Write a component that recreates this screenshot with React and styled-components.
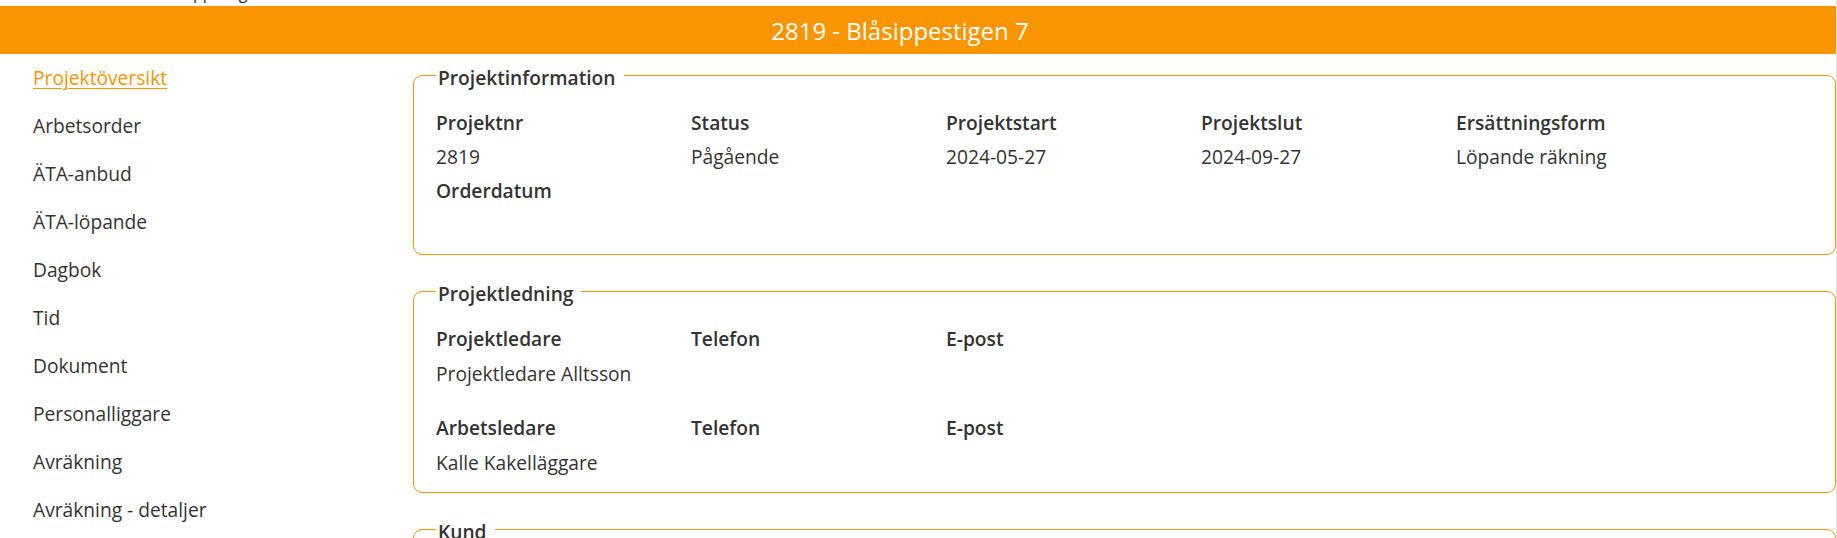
import React from 'react'
import styled, { createGlobalStyle } from 'styled-components'

const orange = '#f89500'
const ink = '#333'

const GlobalStyle = createGlobalStyle`
    html, body {
        margin: 0;
        padding: 0;
        background: #fff;
    }
    body {
        font-family: "Open Sans", "Noto Sans", sans-serif;
        font-size: 19.2px;
        color: ${ink};
        overflow: hidden;
    }
`

const Page = styled.div`
    margin-top: -20px;
    border-right: 1px solid #e4e4e4;
`

const Crumb = styled.div`
    height: 26px;
    line-height: 26px;
    font-size: 16px;
    padding-left: 158px;
    color: #222;
`

const Header = styled.header`
    height: 48px;
    background: ${orange};
    color: #fff;
    display: flex;
    align-items: center;
    justify-content: center;
    padding-right: 36px;
    font-size: 24px;
`

const Body = styled.div`
    display: flex;
    align-items: flex-start;
`

const Sidebar = styled.nav`
    width: 413px;
    flex-shrink: 0;
    padding-left: 33px;
    box-sizing: border-box;
    display: flex;
    flex-direction: column;
`

const NavItem = styled.a`
    height: 48px;
    line-height: 48px;
    white-space: nowrap;
    color: ${props => props.active ? orange : ink};
    text-decoration: ${props => props.active ? 'underline' : 'none'};
    text-underline-offset: 3px;
    text-decoration-thickness: 1px;
    cursor: pointer;
`

const Main = styled.main`
    flex: 1;
    padding-top: 5px;
    display: flex;
    flex-direction: column;
    gap: 20px;
`

const Section = styled.fieldset`
    margin: 0;
    padding: 15px 22px 12px;
    border: 1px solid ${orange};
    border-radius: 9px;
    min-width: 0;
`

const Legend = styled.legend`
    padding: 6px 8px 0 2px;
    font-weight: 600;
    line-height: 26px;
`

const Grid = styled.div`
    display: grid;
    grid-template-columns: repeat(5, 255px);
    row-gap: ${props => props.gap || 0}px;
    margin-top: ${props => props.shift || 0}px;
    line-height: ${props => props.lh || 34}px;
`

const Field = styled.div`
    display: flex;
    flex-direction: column;
`

const Label = styled.div`
    font-weight: 600;
`

const Value = styled.div`
    min-height: 1lh;
`

const nav = [
    'Projektöversikt',
    'Arbetsorder',
    'ÄTA-anbud',
    'ÄTA-löpande',
    'Dagbok',
    'Tid',
    'Dokument',
    'Personalliggare',
    'Avräkning',
    'Avräkning - detaljer',
    'Fakturering',
]

const projectInfo = [
    ['Projektnr', '2819'],
    ['Status', 'Pågående'],
    ['Projektstart', '2024-05-27'],
    ['Projektslut', '2024-09-27'],
    ['Ersättningsform', 'Löpande räkning'],
    ['Orderdatum', ''],
]

const leaders = [
    ['Projektledare', 'Projektledare Alltsson'],
    ['Telefon', ''],
    ['E-post', ''],
    [null],
    [null],
    ['Arbetsledare', 'Kalle Kakelläggare'],
    ['Telefon', ''],
    ['E-post', ''],
]

const customer = [
    ['Kund', 'Bostadsrättsföreningen Blåsippan'],
    ['Kontaktperson', ''],
    ['Telefon', ''],
    ['E-post', ''],
]

function Fields({ items, gap, lh, shift }) {
    return (
        <Grid gap={gap} lh={lh} shift={shift}>
            {items.map(([label, value], i) => label === null
                ? <span key={i} />
                : <Field key={i}>
                    <Label>{label}</Label>
                    <Value>{value}</Value>
                </Field>
            )}
        </Grid>
    )
}

export default function App() {
    return (
        <>
            <GlobalStyle />
            <Page>
                <Crumb>Blåsippestigen</Crumb>
                <Header>2819 - Blåsippestigen 7</Header>
                <Body>
                    <Sidebar>
                        {nav.map((item, i) => <NavItem key={item} active={i === 0}>{item}</NavItem>)}
                    </Sidebar>
                    <Main>
                        <Section>
                            <Legend>Projektinformation</Legend>
                            <Fields items={projectInfo} />
                        </Section>
                        <Section>
                            <Legend>Projektledning</Legend>
                            <Fields items={leaders} gap={19} lh={35} shift={-1} />
                        </Section>
                        <Section>
                            <Legend>Kund</Legend>
                            <Fields items={customer} />
                        </Section>
                    </Main>
                </Body>
            </Page>
        </>
    )
}
